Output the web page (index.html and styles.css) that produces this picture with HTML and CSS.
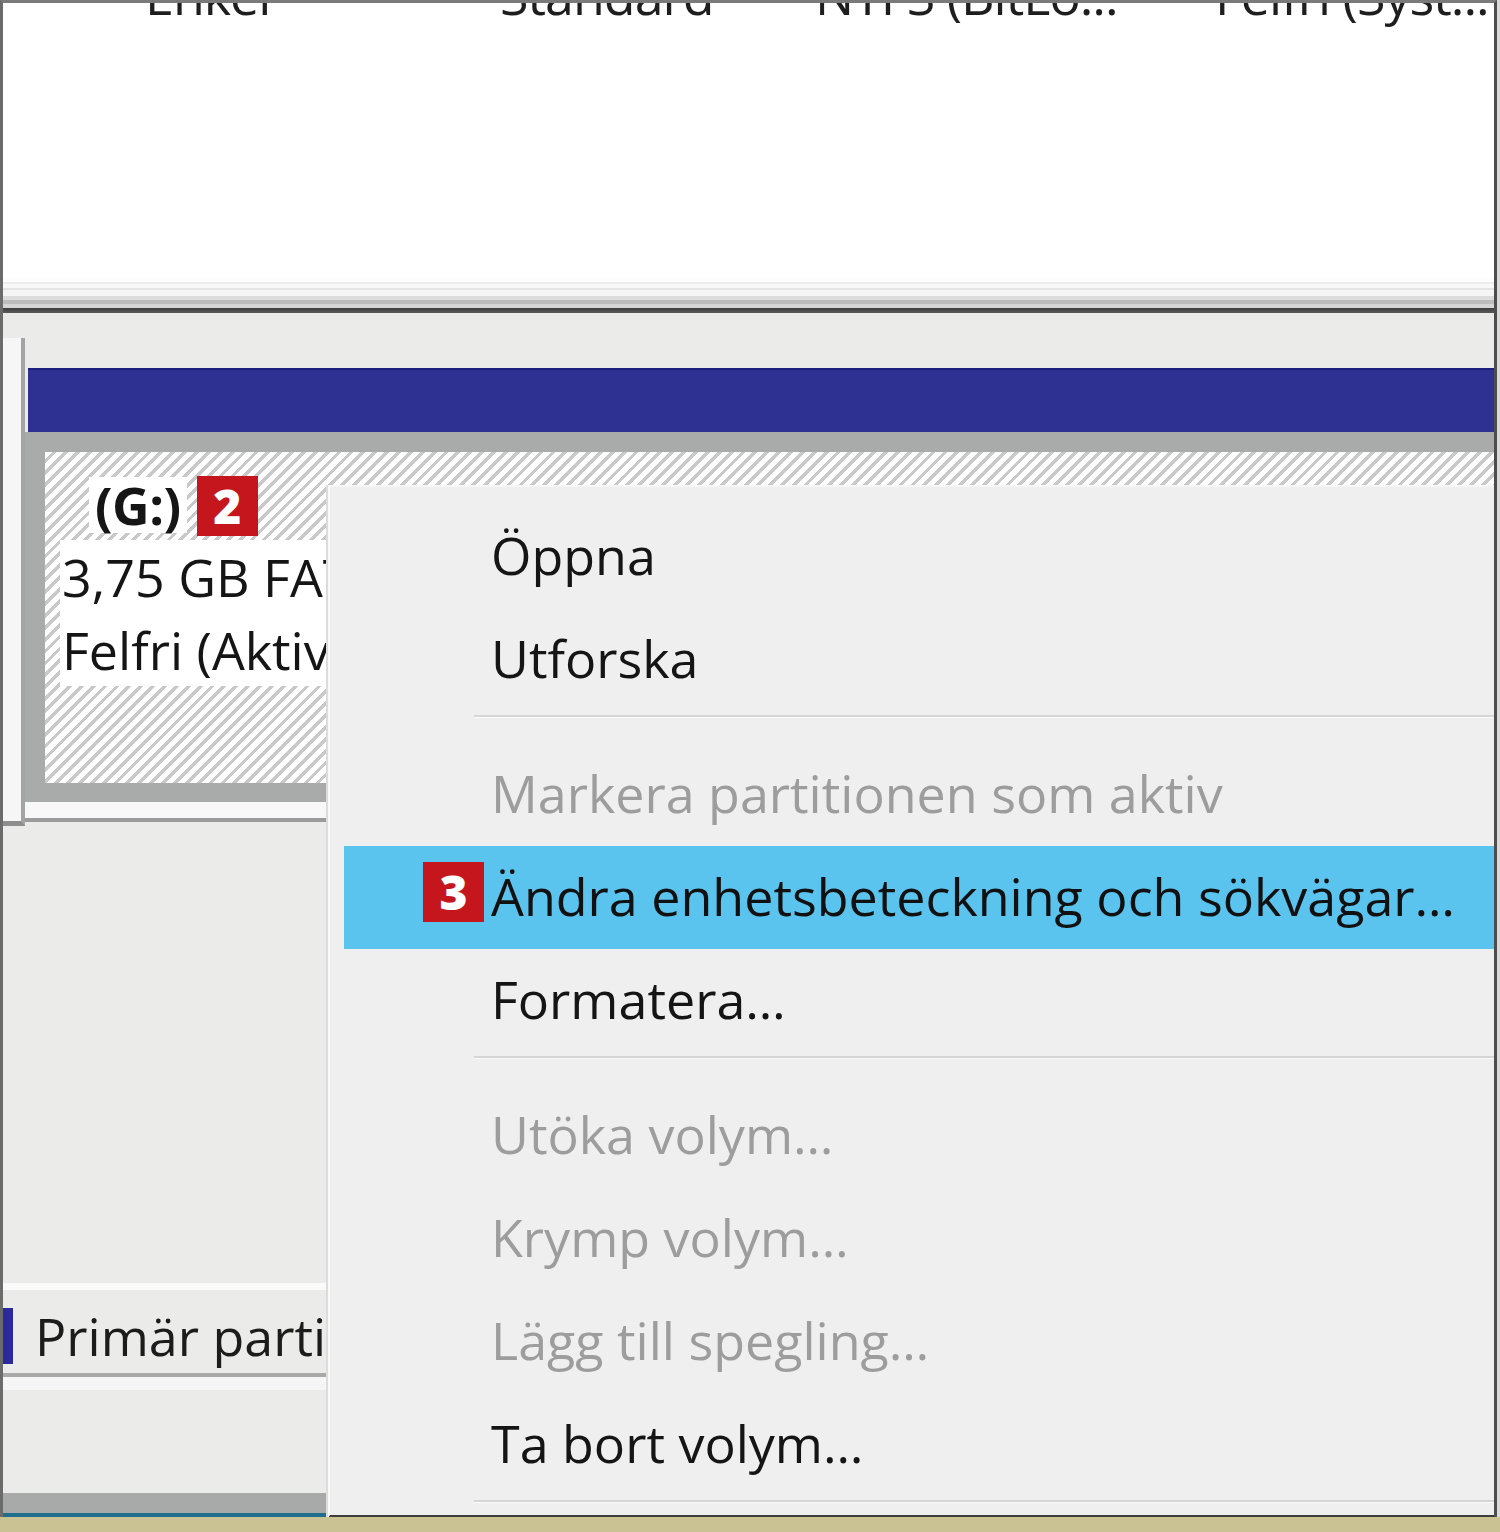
FILE: index.html
```html
<!DOCTYPE html>
<html lang="sv">
<head>
<meta charset="utf-8">
<title>Diskhantering</title>
<link rel="stylesheet" href="styles.css">
</head>
<body>
<div class="screen">
  <div class="frame">
    <section class="list">
      <div class="list-row">
        <span class="col col-layout">Enkel</span>
        <span class="col col-type">Standard</span>
        <span class="col col-fs">NTFS (BitLo...</span>
        <span class="col col-status">Felfri (Syst...</span>
      </div>
      <div class="list-end"></div>
    </section>
    <div class="splitter"></div>
    <section class="graph">
      <div class="disk-row">
        <div class="disk-label"></div>
        <div class="volume-wrap">
          <div class="volume">
            <div class="vol-bar"></div>
            <div class="vol-body">
              <div class="hatch">
                <div class="vol-line vol-name"><span class="txt bold">(G:)</span><span class="badge badge-2">2</span></div>
                <div class="vol-line"><span class="txt wide">3,75 GB FAT32</span></div>
                <div class="vol-line"><span class="txt wide">Felfri (Aktiv, Primär partition)</span></div>
              </div>
            </div>
          </div>
          <div class="row-strip"></div>
        </div>
      </div>
      <div class="legend-area">
        <div class="legend">
          <span class="legend-swatch"></span>
          <span class="legend-text">Primär partition</span>
        </div>
      </div>
      <div class="status-band"></div>
    </section>
    <nav class="menu">
      <div class="item">Öppna</div>
      <div class="item">Utforska</div>
      <div class="sep"></div>
      <div class="item disabled">Markera partitionen som aktiv</div>
      <div class="item active"><span class="badge badge-3">3</span>Ändra enhetsbeteckning och sökvägar…</div>
      <div class="item">Formatera…</div>
      <div class="sep"></div>
      <div class="item disabled">Utöka volym…</div>
      <div class="item disabled">Krymp volym…</div>
      <div class="item disabled">Lägg till spegling…</div>
      <div class="item">Ta bort volym…</div>
      <div class="sep"></div>
    </nav>
  </div>
  <div class="desk"></div>
</div>
</body>
</html>
```

FILE: styles.css
```css
* { box-sizing: border-box; }
html, body { margin: 0; padding: 0; }
body {
  width: 1500px;
  height: 1532px;
  overflow: hidden;
  background: #cbc294;
  font-family: "Open Sans", "Noto Sans", "DejaVu Sans", sans-serif;
  color: #1c1c1c;
}
.screen {
  width: 1500px;
  height: 1532px;
  display: flex;
  flex-direction: column;
  background: #d8d9d8;
}
.frame {
  position: relative;
  height: 1517px;
  width: 1497px;
  border-left: 3px solid #6b6b6b;
  border-top: 3px solid #7a7a7a;
  border-right: 3px solid #4d4d4d;
  background: #ebecea;
  display: flex;
  flex-direction: column;
  overflow: hidden;
}
.desk {
  height: 15px;
  background: #cbc294;
}

/* top list */
.list {
  height: 305px;
  background: #ffffff;
  display: flex;
  flex-direction: column;
  overflow: hidden;
}
.list-row {
  display: grid;
  grid-template-columns: 142px 355px 315px 400px 1fr;
  margin-top: -44px;
  height: 72px;
  font-size: 52px;
  line-height: 72px;
  white-space: nowrap;
  color: #1e1e1e;
  letter-spacing: -1px;
}
.col-layout { grid-column: 2 / 3; }
.col { overflow: hidden; }
.list-end {
  margin-top: auto;
  height: 30px;
  background: linear-gradient(#fdfdfd 0 4px, #ececec 4px 6px, #f8f8f8 6px 10px, #e4e4e4 10px 12px, #f5f5f5 12px 18px, #dcdcdc 18px 22px, #bdbdbd 22px 26px, #d6d6d6 26px 30px);
}
.splitter {
  height: 5px;
  background: linear-gradient(#3f3f3f, #5a5a5a);
}

/* graphical view */
.graph {
  flex: 1;
  display: flex;
  flex-direction: column;
  background: #ebecea;
}
.disk-row {
  display: flex;
  margin-top: 25px;
  height: 488px;
}
.disk-label {
  width: 22px;
  background: #f6f6f6;
  border-right: 4px solid #a3a5a4;
  border-bottom: 5px solid #8c8d8c;
  flex: none;
}
.volume-wrap {
  flex: 1;
  display: flex;
  flex-direction: column;
  padding-top: 30px;
}
.volume {
  display: flex;
  flex-direction: column;
}
.vol-bar {
  height: 64px;
  background: #2e3192;
  border-top: 2px solid #1c1f7c;
  margin-left: 3px;
}
.vol-body {
  background: #a9abaa;
  padding: 20px 0 19px 20px;
}
.hatch {
  height: 331px;
  padding-top: 17px;
  background: repeating-linear-gradient(135deg, #ffffff 0 5px, #c9c9c9 5px 8.4px);
  overflow: hidden;
}
.vol-line {
  display: flex;
  align-items: center;
  height: 73px;
  padding-left: 15px;
  font-size: 52px;
  white-space: nowrap;
}
.vol-name {
  padding-left: 44px;
  height: 71px;
}
.txt {
  background: #ffffff;
  line-height: 73px;
  color: #151515;
}
.txt.bold { font-weight: 700; font-size: 52px; line-height: 56px; padding: 0 6px; letter-spacing: -0.5px; }
.txt.wide { padding-left: 2px; }
.badge {
  display: inline-flex;
  align-items: center;
  justify-content: center;
  width: 61px;
  height: 60px;
  background: #c6161d;
  color: #ffffff;
  font-family: "Open Sans", "DejaVu Sans", sans-serif;
  font-weight: 800;
  font-size: 48px;
  line-height: 1;
  letter-spacing: 0;
}
.badge-2 { margin-left: 10px; margin-top: 2px; }
.row-strip {
  height: 20px;
  background: #f8f8f8;
  border-bottom: 4px solid #9a9b9a;
}

.legend-area {
  flex: 1;
  display: flex;
  flex-direction: column;
  justify-content: flex-start;
  padding-top: 457px;
}
.legend {
  height: 94px;
  display: flex;
  align-items: center;
  padding-top: 8px;
  border-top: 7px solid #fafafa;
  border-bottom: 4px solid #a8a9a8;
  box-shadow: 0 13px 0 #f5f5f5;
  margin-left: -3px;
}
.legend-swatch {
  width: 13px;
  height: 56px;
  background: #2a2a9c;
}
.legend-text {
  margin-left: 22px;
  font-size: 52px;
  color: #1c1c1c;
  white-space: nowrap;
}
.status-band {
  height: 24px;
  background: #a8aaa9;
  border-bottom: 4px solid #1f6e8c;
}

/* context menu */
.menu {
  position: absolute;
  left: 325px;
  top: 482px;
  width: 1170px;
  height: 1033px;
  background: #eeefee;
  border-left: 2px solid #f9f9f9;
  border-top: 2px solid #f6f6f6;
  border-bottom: 3px solid #3c3c3c;
  padding: 18px 0 0 14px;
  font-size: 52px;
  box-shadow: -2px 0 0 #dcdcdc;
}
.item {
  position: relative;
  height: 103px;
  line-height: 100px;
  padding-left: 147px;
  color: #151515;
  white-space: nowrap;
}
.item.disabled { color: #9c9d9c; }
.item.active {
  background: #5ac4ee;
  color: #111;
}
.badge-3 {
  position: absolute;
  left: 79px;
  top: 16px;
}
.sep {
  height: 32px;
  margin-left: 130px;
  padding-top: 4px;
}
.sep::before {
  content: "";
  display: block;
  height: 2px;
  background: #d6d6d6;
  border-bottom: 1px solid #fafafa;
}
```
